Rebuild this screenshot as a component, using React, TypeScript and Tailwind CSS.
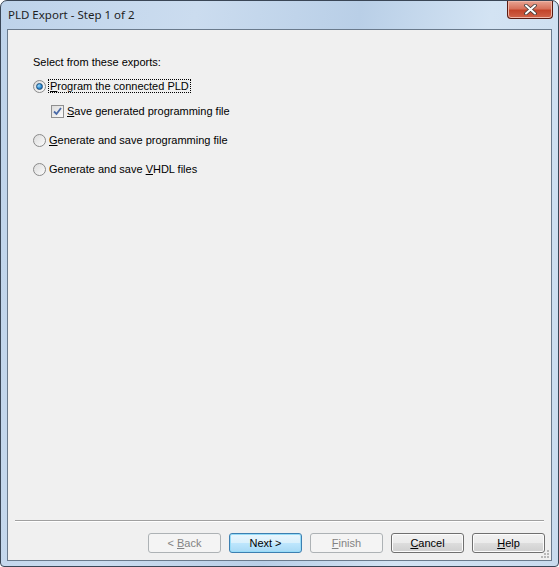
import type { ReactNode } from 'react'

const font = { fontFamily: 'Tahoma, "Liberation Sans", "DejaVu Sans", sans-serif' }

function Radio({ checked }: { checked?: boolean }) {
  return (
    <span className="relative flex h-[13px] w-[13px] shrink-0 items-center justify-center rounded-full border border-[#8a8a8a] bg-gradient-to-br from-[#dcdcdc] to-[#fbfbfb]">
      {checked && (
        <span className="h-[7px] w-[7px] rounded-full border border-[#1d4f7c] bg-[radial-gradient(circle_at_35%_35%,#9fdcfb,#2a8ad4_55%,#0d4f8e)]" />
      )}
    </span>
  )
}

function Checkbox() {
  return (
    <span className="flex h-[13px] w-[13px] shrink-0 items-center justify-center border border-[#8f8f8f] bg-gradient-to-br from-[#dcdcdc] to-[#fbfbfb]">
      <svg width="9" height="9" viewBox="0 0 9 9">
        <path d="M1 4.5 L3.5 7 L8 1" fill="none" stroke="#4a6aa8" strokeWidth="1.8" />
      </svg>
    </span>
  )
}

function Button({ children, disabled, primary }: { children: ReactNode; disabled?: boolean; primary?: boolean }) {
  const cls = disabled
    ? 'border-[#adb2b5] bg-[#f4f4f4] text-[#838383]'
    : primary
      ? 'border-[#3c7fb1] bg-[linear-gradient(#eaf6fd_0%,#d9f0fc_50%,#bee6fd_51%,#a7d9f5_100%)] text-black shadow-[inset_0_0_0_1px_#97dcf8]'
      : 'border-[#707070] bg-[linear-gradient(#f2f2f2_0%,#ebebeb_50%,#dddddd_51%,#cfcfcf_100%)] text-black shadow-[inset_0_0_0_1px_#fcfcfc]'
  return (
    <div className={`flex h-[20px] w-[73px] items-center justify-center rounded-[3px] border text-[11px] ${cls}`}>
      {children}
    </div>
  )
}

export default function App() {
  return (
    <div className="h-[567px] w-[559px] bg-white" style={font}>
      <div className="flex h-full w-full flex-col rounded-t-[7px] rounded-b-[4px] border border-[#3a4656] bg-[linear-gradient(100deg,#bed3ea_0%,#cbdcef_30%,#b9cfe7_55%,#d3e3f3_75%,#c9dbee_100%)]">
        <div className="flex h-[28px] items-start justify-between">
          <div className="pl-[7px] pt-[5px] text-[11.5px] text-[#1e1e1e]" style={{ fontFamily: '"Noto Sans", "Segoe UI", sans-serif' }}>
            PLD Export - Step 1 of 2
          </div>
          <div className="mr-[5px] flex h-[18px] w-[46px] items-center justify-center rounded-b-[4px] border border-t-0 border-[#5a1b12] bg-[linear-gradient(#e8a493_0%,#d7725c_45%,#c3442a_55%,#d0644a_100%)] shadow-[inset_0_0_0_1px_#f0b5a6]">
            <svg width="13" height="11" viewBox="0 0 13 11">
              <path d="M2 1.5 L11 9.5 M11 1.5 L2 9.5" stroke="#3a3a3a" strokeWidth="3.6" strokeLinecap="round" />
              <path d="M2 1.5 L11 9.5 M11 1.5 L2 9.5" stroke="#ffffff" strokeWidth="2" strokeLinecap="round" />
            </svg>
          </div>
        </div>

        <div className="relative mx-[6px] mb-[5px] flex flex-1 flex-col border border-[#6a7a8c] bg-[#f0f0f0] text-[11px] text-black">
          <div className="flex flex-1 flex-col pl-[25px] pt-[26px]">
            <div className="h-[13px] leading-[13px]">Select from these exports:</div>

            <div className="mt-[10px] flex h-[14px] items-center gap-[2px]">
              <Radio checked />
              <span className="border border-dotted border-black px-[1px] leading-[12px]">
                <u>P</u>rogram the connected PLD
              </span>
            </div>

            <div className="ml-[18px] mt-[11px] flex h-[14px] items-center gap-[3px]">
              <Checkbox />
              <span className="leading-[13px]">
                <u>S</u>ave generated programming file
              </span>
            </div>

            <div className="mt-[15px] flex h-[14px] items-center gap-[3px]">
              <Radio />
              <span className="leading-[13px]">
                <u>G</u>enerate and save programming file
              </span>
            </div>

            <div className="mt-[15px] flex h-[14px] items-center gap-[3px]">
              <Radio />
              <span className="leading-[13px]">
                Generate and save <u>V</u>HDL files
              </span>
            </div>
          </div>

          <div className="mx-[7px] border-t border-b border-t-[#a0a0a0] border-b-white" />

          <div className="mb-[7px] mt-[11px] flex justify-end gap-[8px] pr-[6px]">
            <Button disabled>
              &lt;&nbsp;<u>B</u>ack
            </Button>
            <Button primary>Next &gt;</Button>
            <Button disabled>
              <u>F</u>inish
            </Button>
            <Button>
              <u>C</u>ancel
            </Button>
            <Button>
              <u>H</u>elp
            </Button>
          </div>

          <svg className="absolute bottom-[1px] right-[1px]" width="9" height="9" viewBox="0 0 9 9">
            <g fill="#b8b8b8">
              <rect x="6" y="0" width="2" height="2" />
              <rect x="3" y="3" width="2" height="2" />
              <rect x="6" y="3" width="2" height="2" />
              <rect x="0" y="6" width="2" height="2" />
              <rect x="3" y="6" width="2" height="2" />
              <rect x="6" y="6" width="2" height="2" />
            </g>
          </svg>
        </div>
      </div>
    </div>
  )
}
